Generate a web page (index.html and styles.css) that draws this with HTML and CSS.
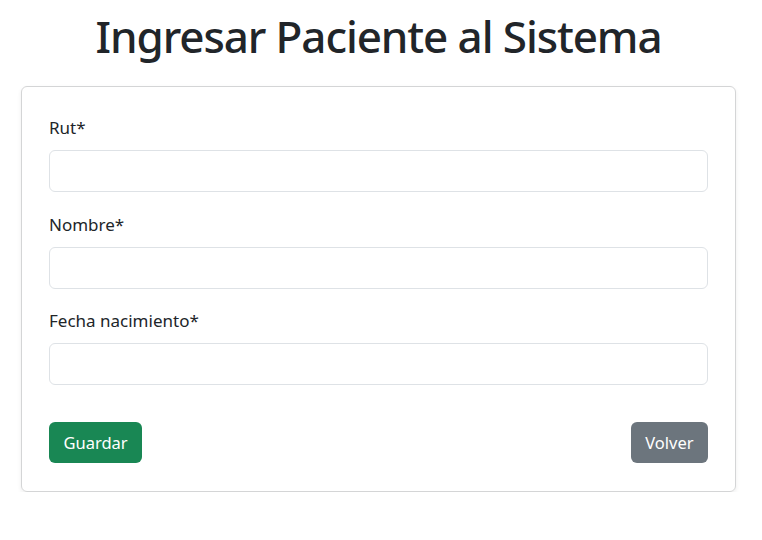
FILE: index.html
```html
<!DOCTYPE html>
<html lang="es">
<head>
<meta charset="utf-8">
<title>Ingresar Paciente</title>
<link rel="stylesheet" href="styles.css">
</head>
<body>
<main class="page">
  <h1 class="title">Ingresar Paciente al Sistema</h1>
  <form class="card">
    <div class="field">
      <label class="label" for="rut">Rut*</label>
      <input class="input" id="rut" type="text">
    </div>
    <div class="field">
      <label class="label" for="nombre">Nombre*</label>
      <input class="input" id="nombre" type="text">
    </div>
    <div class="field">
      <label class="label" for="fecha">Fecha nacimiento*</label>
      <input class="input" id="fecha" type="text">
    </div>
    <div class="actions">
      <button type="button" class="btn btn-success">Guardar</button>
      <button type="button" class="btn btn-secondary">Volver</button>
    </div>
  </form>
</main>
</body>
</html>
```
FILE: styles.css
```css
* { box-sizing: border-box; }
body {
  margin: 0;
  background: #fff;
  color: #212529;
  font-family: "Noto Sans", "Open Sans", sans-serif;
}
.page {
  width: 762px;
  padding: 0 26px 0 21px;
}
.title {
  margin: 0;
  padding-top: 6px;
  font-size: 44px;
  font-weight: 550;
  letter-spacing: -1.1px;
  line-height: 60px;
  text-align: center;
  color: #212529;
}
.card {
  margin-top: 20px;
  border: 1px solid #d4d5d6;
  border-radius: 6px;
  box-shadow: 0 2px 4px rgba(0, 0, 0, 0.075);
  padding: 27px 27px 28px 27px;
  display: flex;
  flex-direction: column;
}
.field {
  display: flex;
  flex-direction: column;
  gap: 9px;
  margin-bottom: 18.5px;
}
.label {
  font-size: 17px;
  line-height: 27px;
  color: #212529;
}
.input {
  height: 42px;
  border: 1px solid #dee2e6;
  border-radius: 6px;
  background: #fff;
  font: inherit;
}
.actions {
  display: flex;
  justify-content: space-between;
  margin-top: 18px;
}
.btn {
  height: 41px;
  border: 1px solid transparent;
  border-radius: 6px;
  padding: 0 13.5px;
  font-family: inherit;
  font-size: 16.5px;
  color: #fff;
}
.btn-success { background: #198754; }
.btn-secondary { background: #6c757d; }
```
